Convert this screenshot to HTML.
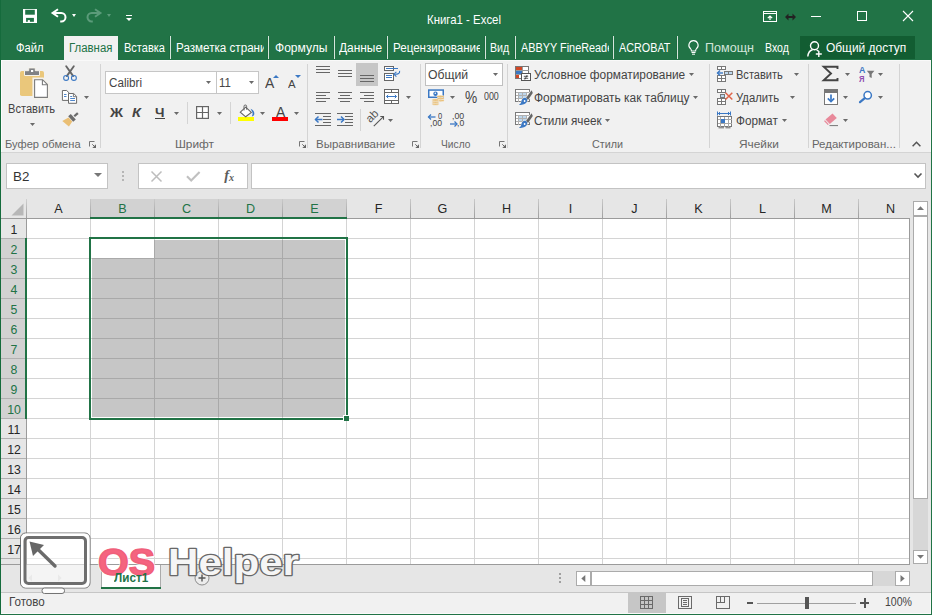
<!DOCTYPE html>
<html lang="ru"><head><meta charset="utf-8"><title>Книга1 - Excel</title>
<style>
html,body{margin:0;padding:0}
body{width:932px;height:615px;overflow:hidden;position:relative;background:#e6e6e6;font-family:"Liberation Sans",sans-serif;font-size:12px;color:#444}
.a{position:absolute}
.t{position:absolute;white-space:nowrap}
.t span{display:inline-block;transform-origin:0 50%}
svg{position:absolute;overflow:visible}
.sep{position:absolute;width:1px;background:#d4d4d4}
.tsep{position:absolute;width:1px;top:36px;height:23px;background:#d6e5dc;box-shadow:-1px 0 0 #1d6b40}
.dd{position:absolute;width:0;height:0;border-left:3px solid transparent;border-right:3px solid transparent;border-top:3px solid #666}
</style></head><body>
<!-- title bar + tabs -->
<div class="a" style="left:0;top:0;width:932px;height:60px;background:#217346"></div>
<div class="a" style="left:64px;top:36px;width:54px;height:24px;background:#f1f1f1"></div>
<div class="a" style="left:800px;top:36px;width:115px;height:23px;background:#125d32"></div>
<div class="tsep" style="left:170px"></div><div class="tsep" style="left:268px"></div><div class="tsep" style="left:334px"></div>
<div class="tsep" style="left:387px"></div><div class="tsep" style="left:485px"></div><div class="tsep" style="left:515px"></div>
<div class="tsep" style="left:613px"></div><div class="tsep" style="left:677px"></div>
<!-- QAT icons -->
<svg style="left:23px;top:9px" width="14" height="14" viewBox="0 0 14 14"><rect x="0" y="0" width="14" height="14" fill="#fff"/><rect x="2.200" y="0.800" width="9.600" height="4.900" fill="#217346"/><rect x="3.100" y="8.900" width="7.800" height="3.900" fill="#217346"/><rect x="4.800" y="11.100" width="2.100" height="1.900" fill="#fff"/></svg>
<svg style="left:51px;top:8px" width="16" height="15" viewBox="51 8 16 15"><path d="M58 9.300L52.600 13l5.400 3.700" fill="none" stroke="#fff" stroke-width="2" stroke-linejoin="miter"/><path d="M54 13h7.300a4.200 4.200 0 0 1 0 8.400h-1.100" fill="none" stroke="#fff" stroke-width="2"/></svg>
<div class="dd" style="left:72px;top:14px;border-top-color:#fff;border-left-width:2.5px;border-right-width:2.5px"></div>
<svg style="left:86px;top:8px" width="16" height="15" viewBox="0 0 16 15"><path d="M9 1.300L14.400 5l-5.400 3.700" fill="none" stroke="#5b9b7a" stroke-width="2"/><path d="M13 5h-7.300a4.200 4.200 0 0 0 0 8.400h1.100" fill="none" stroke="#5b9b7a" stroke-width="2"/></svg>
<div class="dd" style="left:107px;top:14px;border-top-color:#5b9b7a;border-left-width:2.5px;border-right-width:2.5px"></div>
<div class="a" style="left:126px;top:14.500px;width:6px;height:1.500px;background:#fff"></div>
<div class="dd" style="left:126px;top:18px;border-top-color:#fff"></div>
<!-- window controls -->
<svg style="left:763px;top:11px" width="14" height="11" viewBox="0 0 14 11"><g shape-rendering="crispEdges"><rect x="0.500" y="0.500" width="13" height="10" fill="none" stroke="#fff"/><path d="M0.500 2.500h13" stroke="#fff"/></g><path d="M7 9V5.200M4.800 7.200l2.200-2.200l2.200 2.200" fill="none" stroke="#fff" stroke-width="1.200"/></svg>
<svg style="left:785px;top:13px" width="11" height="8" viewBox="0 0 11 8"><path d="M0 4l3.500-3.500v2.500h4v-2.500l3.500 3.500l-3.500 3.500v-2.500h-4v2.500z" fill="#222"/></svg>
<div class="a" style="left:811px;top:16px;width:10px;height:1px;background:#fff"></div>
<div class="a" style="left:857px;top:11px;width:8px;height:8px;border:1px solid #fff"></div>
<svg style="left:903px;top:11px" width="10" height="10" viewBox="0 0 10 10"><path d="M0 0l10 10M10 0L0 10" stroke="#fff" stroke-width="1.1"/></svg>
<!-- help bulb + share person -->
<svg style="left:688px;top:40px" width="11" height="15" viewBox="0 0 11 15"><path d="M5.500 0.600a4.600 4.600 0 0 1 3 8.100c-0.700 0.700-0.900 1.300-0.900 2.300h-4.200c0-1-0.200-1.600-0.900-2.300a4.600 4.600 0 0 1 3-8.100z" fill="none" stroke="#fff" stroke-width="1.100"/><path d="M3.500 12.500h4M4 14.200h3" stroke="#fff" stroke-width="1"/></svg>
<svg style="left:807px;top:41px" width="16" height="16" viewBox="0 0 16 16"><circle cx="7.500" cy="4.800" r="4" fill="none" stroke="#fff" stroke-width="1.400"/><path d="M0.800 15.500c0.400-3.800 2.600-6.200 4.800-6.700M9.500 8.800c0.800 0.300 1.500 0.800 2 1.400" fill="none" stroke="#fff" stroke-width="1.400"/><path d="M11.800 10v6M8.800 13h6" stroke="#fff" stroke-width="1.400"/></svg>

<!-- ribbon -->
<div class="a" style="left:0;top:60px;width:932px;height:92px;background:#f1f1f1"></div>
<div class="a" style="left:1px;top:60px;width:929px;height:1px;background:#f9f9f9"></div>
<div class="a" style="left:0;top:152px;width:932px;height:1px;background:#d4d4d4"></div>
<div class="sep" style="left:100px;top:64px;height:84px;background:#d4d4d4"></div>
<div class="sep" style="left:307px;top:64px;height:84px;background:#d4d4d4"></div>
<div class="sep" style="left:420px;top:64px;height:84px;background:#d4d4d4"></div>
<div class="sep" style="left:507px;top:64px;height:84px;background:#d4d4d4"></div>
<div class="sep" style="left:709px;top:64px;height:84px;background:#d4d4d4"></div>
<div class="sep" style="left:808px;top:64px;height:84px;background:#d4d4d4"></div>
<div class="sep" style="left:899px;top:64px;height:84px;background:#d4d4d4"></div>
<svg style="left:18px;top:66px" width="32" height="34" viewBox="18 66 32 34">
<rect x="20" y="71" width="24" height="25" rx="1.800" fill="#eac77b"/>
<path d="M24.500 75.500v-4.800h4.200v-2.800h6.600v2.800h4.200v4.800z" fill="#808285" stroke="#f6f3ea" stroke-width="1"/>
<rect x="31" y="70" width="2.200" height="2" fill="#fff"/>
<path d="M33.600 78.700h9.400l5.400 5.400v14.300h-14.800z" fill="#fff" stroke="#f4f1ea" stroke-width="2.400"/>
<path d="M34.600 79.700h8l4.800 4.800v12.900h-12.800z" fill="#fff" stroke="#7b7b7b" stroke-width="1.100"/>
<path d="M42.400 79.900v4.800h4.800" fill="none" stroke="#7b7b7b" stroke-width="1.100"/>
</svg>
<svg style="left:30.0px;top:122.7px" width="5" height="3" viewBox="0 0 5 3"><path d="M0 0h5L2.5 3z" fill="#6a6a6a"/></svg>
<svg style="left:62px;top:65px" width="17" height="17" viewBox="62 65 17 17">
<path d="M66.200 66.300l7 9.800M73.800 66.300l-7 9.800" stroke="#666" stroke-width="1.900" stroke-linecap="round"/>
<circle cx="66.100" cy="77.900" r="2.450" fill="none" stroke="#3b78c4" stroke-width="1.100"/>
<circle cx="73.900" cy="77.900" r="2.450" fill="none" stroke="#3b78c4" stroke-width="1.100"/>
</svg>
<svg style="left:61px;top:89px" width="17" height="16" viewBox="61 89 17 16">
<path d="M62.400 90.500h4.300l2.300 2.300v7.600h-6.600z" fill="#fff" stroke="#6b6b6b" stroke-width="1"/>
<path d="M64 94.500h2.500M64 96.500h2.500" stroke="#3b78c4" stroke-width="0.900"/>
<path d="M68.500 93.500h5.200l2.900 2.900v6.900h-8.100z" fill="#fff" stroke="#6b6b6b" stroke-width="1"/>
<path d="M73.400 93.700v3h3" fill="none" stroke="#6b6b6b" stroke-width="0.900"/>
<path d="M70.200 98.500h4.800M70.200 100.500h4.800M70.200 96.500h2" stroke="#3b78c4" stroke-width="0.900"/>
</svg>
<svg style="left:84.0px;top:96.0px" width="5" height="3" viewBox="0 0 5 3"><path d="M0 0h5L2.5 3z" fill="#6a6a6a"/></svg>
<svg style="left:61px;top:111px" width="18" height="17" viewBox="61 111 18 17">
<path d="M62.300 121l6.200-3.600 3.800 4.200-3.400 5z" fill="#eabf75"/>
<path d="M68.200 116.200l2.600-2.200 5 5.400-2.600 2.400z" fill="#6b6b6b"/>
<path d="M73.500 115.500l3.600-3.200 1.500 1.600-3.600 3.200z" fill="#6b6b6b"/>
</svg>
<svg style="left:89px;top:141px" width="7" height="7" viewBox="0 0 7 7"><path d="M0.500 5.500v-5h5" fill="none" stroke="#777" stroke-width="1"/><path d="M7 3.300v3.700h-3.700z" fill="#666"/><path d="M3.300 3.300l3 3" stroke="#666" stroke-width="1"/></svg>
<div class="a" style="left:105px;top:71px;width:110px;height:21px;background:#fff;border:1px solid #c6c6c6"></div>
<div class="a" style="left:216px;top:71px;width:41px;height:21px;background:#fff;border:1px solid #c6c6c6"></div>
<svg style="left:205.9px;top:81.0px" width="5" height="3" viewBox="0 0 5 3"><path d="M0 0h5L2.5 3z" fill="#6a6a6a"/></svg>
<svg style="left:248.8px;top:81.0px" width="5" height="3" viewBox="0 0 5 3"><path d="M0 0h5L2.5 3z" fill="#6a6a6a"/></svg>
<svg style="left:272.600px;top:75px" width="6" height="3" viewBox="0 0 6 3"><path d="M0 3h6L3 0z" fill="#3b78c4"/></svg>
<svg style="left:294.600px;top:75px" width="6" height="3" viewBox="0 0 6 3"><path d="M0 0h6L3 3z" fill="#3b78c4"/></svg>
<svg style="left:173.8px;top:112.0px" width="5" height="3" viewBox="0 0 5 3"><path d="M0 0h5L2.5 3z" fill="#6a6a6a"/></svg>
<div class="a" style="left:155px;top:118px;width:10px;height:1px;background:#444"></div>
<div class="sep" style="left:187px;top:102px;height:22px;background:#d4d4d4"></div>
<div class="sep" style="left:230px;top:102px;height:22px;background:#d4d4d4"></div>
<svg style="left:196px;top:106px" width="13" height="13" viewBox="0 0 13 13"><rect x="0.600" y="0.600" width="11.800" height="11.800" fill="#fff" stroke="#666" stroke-width="1.200"/><path d="M6.500 0.500v12M0.500 6.500h12" stroke="#666" stroke-width="1.200"/></svg>
<svg style="left:217.0px;top:112.0px" width="5" height="3" viewBox="0 0 5 3"><path d="M0 0h5L2.5 3z" fill="#6a6a6a"/></svg>
<svg style="left:237px;top:104px" width="19" height="18" viewBox="237 104 19 18">
<rect x="238" y="117" width="16" height="4" fill="#ffff00"/>
<path d="M245.700 107.200l5.600 5.200-5.600 4.400-5.400-4.600z" fill="#fff" stroke="#666" stroke-width="1.100"/>
<path d="M244 110.500v-4.200a1.300 1.300 0 0 1 2.600 0v3.400" fill="none" stroke="#666" stroke-width="1"/>
<path d="M250.600 108.700c2.700 1 4.100 3.400 3.700 5.500-0.300 1.400-1.300 2.100-2.500 2 1-1.400 1.100-3.300 0.200-4.700z" fill="#3b78c4"/>
</svg>
<svg style="left:259.9px;top:112.0px" width="5" height="3" viewBox="0 0 5 3"><path d="M0 0h5L2.5 3z" fill="#6a6a6a"/></svg>
<div class="a" style="left:272px;top:117px;width:16px;height:4px;background:#ff0000"></div>
<svg style="left:294.0px;top:112.0px" width="5" height="3" viewBox="0 0 5 3"><path d="M0 0h5L2.5 3z" fill="#6a6a6a"/></svg>
<svg style="left:299px;top:141px" width="7" height="7" viewBox="0 0 7 7"><path d="M0.500 5.500v-5h5" fill="none" stroke="#777" stroke-width="1"/><path d="M7 3.300v3.700h-3.700z" fill="#666"/><path d="M3.300 3.300l3 3" stroke="#666" stroke-width="1"/></svg>
<div class="a" style="left:356px;top:63px;width:22px;height:23px;background:#c6c6c6"></div>
<svg style="left:0;top:0" width="932" height="160" viewBox="0 0 932 160" shape-rendering="crispEdges"><rect x="316" y="66" width="14" height="1" fill="#666"/><rect x="316" y="69" width="14" height="1" fill="#666"/><rect x="316" y="72" width="14" height="1" fill="#666"/><rect x="338" y="70" width="14" height="1" fill="#666"/><rect x="338" y="73" width="14" height="1" fill="#666"/><rect x="338" y="76" width="14" height="1" fill="#666"/><rect x="360" y="75" width="14" height="1" fill="#666"/><rect x="360" y="78" width="14" height="1" fill="#666"/><rect x="360" y="81" width="14" height="1" fill="#666"/><rect x="316" y="92" width="14" height="1" fill="#666"/><rect x="316" y="95" width="10" height="1" fill="#666"/><rect x="316" y="98" width="14" height="1" fill="#666"/><rect x="316" y="101" width="10" height="1" fill="#666"/><rect x="338.0" y="92" width="14" height="1" fill="#666"/><rect x="340.0" y="95" width="10" height="1" fill="#666"/><rect x="338.0" y="98" width="14" height="1" fill="#666"/><rect x="340.0" y="101" width="10" height="1" fill="#666"/><rect x="360" y="92" width="14" height="1" fill="#666"/><rect x="364" y="95" width="10" height="1" fill="#666"/><rect x="360" y="98" width="14" height="1" fill="#666"/><rect x="364" y="101" width="10" height="1" fill="#666"/><rect x="315" y="113" width="16" height="1" fill="#666"/><rect x="315" y="125" width="16" height="1" fill="#666"/><rect x="323" y="116" width="8" height="1" fill="#666"/><rect x="323" y="119" width="8" height="1" fill="#666"/><rect x="323" y="122" width="8" height="1" fill="#666"/><rect x="337" y="113" width="16" height="1" fill="#666"/><rect x="337" y="125" width="16" height="1" fill="#666"/><rect x="345" y="116" width="8" height="1" fill="#666"/><rect x="345" y="119" width="8" height="1" fill="#666"/><rect x="345" y="122" width="8" height="1" fill="#666"/></svg>
<svg style="left:383px;top:65px" width="18" height="17" viewBox="383 65 18 17">
<rect x="384.500" y="66.500" width="9" height="4" fill="#fff" stroke="#666"/>
<rect x="384.500" y="73.500" width="9" height="7" fill="#fff" stroke="#666"/>
<path d="M386 68.500h12" stroke="#3b78c4" stroke-width="1"/>
<path d="M386 75.500h6M386 77.500h6" stroke="#3b78c4" stroke-width="1" shape-rendering="crispEdges"/>
<path d="M399.600 70.800c0.400 2.400-1.200 3.500-5.200 3.400" fill="none" stroke="#3b78c4" stroke-width="1.100"/>
<path d="M396.400 71.800l-2.500 2.400 2.500 2.400" fill="none" stroke="#3b78c4" stroke-width="1.100"/>
</svg>
<svg style="left:384px;top:89px" width="15" height="15" viewBox="0 0 15 15">
<g shape-rendering="crispEdges"><rect x="0.500" y="0.500" width="14" height="14" fill="#fff" stroke="#666"/>
<path d="M0.500 3.500h14M0.500 11.500h14M7.500 0.500v3M7.500 11.500v3" stroke="#666"/></g>
<path d="M2.500 7.500h10" stroke="#3b78c4" stroke-width="1"/><path d="M4.200 5.800l-1.700 1.700 1.700 1.700M10.800 5.800l1.700 1.700-1.700 1.700" fill="none" stroke="#3b78c4" stroke-width="1"/>
</svg>
<svg style="left:406.0px;top:96.0px" width="5" height="3" viewBox="0 0 5 3"><path d="M0 0h5L2.5 3z" fill="#6a6a6a"/></svg>
<svg style="left:315px;top:116px" width="8" height="7" viewBox="0 0 8 7"><path d="M0.500 3.500h7" stroke="#3b78c4" stroke-width="1.500"/><path d="M3.500 0.500l-3 3 3 3" fill="none" stroke="#3b78c4" stroke-width="1.500"/></svg>
<svg style="left:337px;top:116px" width="8" height="7" viewBox="0 0 8 7"><path d="M0 3.500h7" stroke="#3b78c4" stroke-width="1.500"/><path d="M4 0.500l3 3-3 3" fill="none" stroke="#3b78c4" stroke-width="1.500"/></svg>
<div class="sep" style="left:360px;top:109px;height:22px;background:#d4d4d4"></div>
<svg style="left:366px;top:110px" width="20" height="19" viewBox="366 110 20 19">
<text x="0" y="0" transform="translate(370.200 123.300) rotate(-45)" font-family="Liberation Sans, sans-serif" font-size="11.500" fill="#555">ab</text>
<path d="M373.800 126.200l9.400-9.400" stroke="#555" stroke-width="1.100"/><path d="M380.300 116.500h3.200v3.200" fill="none" stroke="#555" stroke-width="1.100"/>
</svg>
<svg style="left:388.0px;top:118.7px" width="5" height="3" viewBox="0 0 5 3"><path d="M0 0h5L2.5 3z" fill="#6a6a6a"/></svg>
<svg style="left:412px;top:141px" width="7" height="7" viewBox="0 0 7 7"><path d="M0.500 5.500v-5h5" fill="none" stroke="#777" stroke-width="1"/><path d="M7 3.300v3.700h-3.700z" fill="#666"/><path d="M3.300 3.300l3 3" stroke="#666" stroke-width="1"/></svg>
<div class="a" style="left:425px;top:63px;width:76px;height:21px;background:#fff;border:1px solid #c0c0c0"></div>
<svg style="left:492.7px;top:73.1px" width="5" height="3" viewBox="0 0 5 3"><path d="M0 0h5L2.5 3z" fill="#6a6a6a"/></svg>
<svg style="left:427px;top:88px" width="18" height="18" viewBox="427 88 18 18">
<rect x="428" y="89.300" width="16" height="8.700" fill="#3b78c4"/>
<rect x="429.500" y="90.800" width="13" height="5.700" fill="#fff"/>
<circle cx="435.500" cy="93.700" r="2.200" fill="#3b78c4"/>
<circle cx="435.300" cy="93.300" r="0.800" fill="#fff"/>
<g fill="#eabf75" stroke="#f1f1f1" stroke-width="0.600"><ellipse cx="440.500" cy="100.500" rx="3.700" ry="1.300"/><ellipse cx="440.500" cy="98.500" rx="3.700" ry="1.300"/><ellipse cx="440.500" cy="96.500" rx="3.700" ry="1.300"/>
<ellipse cx="435.500" cy="104" rx="3.700" ry="1.300"/><ellipse cx="435.500" cy="102" rx="3.700" ry="1.300"/><ellipse cx="435.500" cy="100" rx="3.700" ry="1.300"/></g>
</svg>
<svg style="left:450.0px;top:96.0px" width="5" height="3" viewBox="0 0 5 3"><path d="M0 0h5L2.5 3z" fill="#6a6a6a"/></svg>
<svg style="left:428px;top:114px" width="8" height="6" viewBox="0 0 8 6"><path d="M0.500 3h7" stroke="#3b78c4" stroke-width="1.300"/><path d="M3 0.500l-2.500 2.500 2.500 2.500" fill="none" stroke="#3b78c4" stroke-width="1.300"/></svg>
<svg style="left:450px;top:121px" width="8" height="6" viewBox="0 0 8 6"><path d="M0 3h7" stroke="#3b78c4" stroke-width="1.300"/><path d="M4.500 0.500l2.500 2.500-2.500 2.500" fill="none" stroke="#3b78c4" stroke-width="1.300"/></svg>
<svg style="left:499px;top:141px" width="7" height="7" viewBox="0 0 7 7"><path d="M0.500 5.500v-5h5" fill="none" stroke="#777" stroke-width="1"/><path d="M7 3.300v3.700h-3.700z" fill="#666"/><path d="M3.300 3.300l3 3" stroke="#666" stroke-width="1"/></svg>
<svg style="left:514px;top:65px" width="18" height="18" viewBox="514 65 18 18">
<g shape-rendering="crispEdges"><rect x="515.500" y="66.500" width="13" height="12" fill="#fff" stroke="#777"/>
<path d="M515.500 70.500h13M515.500 74.500h13M522.500 66.500v12" stroke="#999"/>
<rect x="516" y="67" width="6" height="3" fill="#d24726"/><rect x="516" y="71" width="6" height="3" fill="#3b78c4"/><rect x="516" y="75" width="3" height="3" fill="#d24726"/>
<rect x="521.500" y="73.500" width="9" height="7" fill="#fff" stroke="#555"/></g>
<path d="M523.800 76.300h4.400M523.800 78.300h4.400M527.200 75l-2.400 4.600" stroke="#333" stroke-width="0.800"/>
</svg>
<svg style="left:514px;top:88px" width="18" height="18" viewBox="514 88 18 18">
<g shape-rendering="crispEdges"><rect x="515.500" y="89.500" width="14" height="12" fill="#fff" stroke="#7a7a7a"/><rect x="519" y="92" width="7" height="6" fill="#bdd7ee"/>
<path d="M515.500 92.500h14M515.500 95.500h14M515.500 98.500h14M518.500 92.500v9M522.500 92.500v9M526.500 92.500v9" stroke="#b0b0b0"/></g>
<path d="M531.600 90.2l-6 8.400 2.200 1.700 5-7.400z" fill="#666" stroke="#f1f1f1" stroke-width="1.200" paint-order="stroke"/>
<path d="M525.200 97.8c-2.800-0.300-3.600 2.200-4 4.200-0.300 1.300-1.200 2.300-2.300 2.800 3.500 0.700 7.800-0.700 8.300-4.200 0.200-1.400-0.600-2.500-2-2.800z" fill="#3b78c4" stroke="#f1f1f1" stroke-width="1" paint-order="stroke"/>
<circle cx="524.600" cy="101" r="0.900" fill="#fff"/>
</svg>
<svg style="left:514px;top:111px" width="18" height="18" viewBox="514 111 18 18">
<g shape-rendering="crispEdges"><rect x="515.500" y="112.500" width="14" height="12" fill="#fff" stroke="#7a7a7a"/><rect x="519" y="115" width="7" height="6" fill="#bdd7ee"/>
<path d="M515.500 115.500h14M515.500 118.500h14M515.500 121.500h14M518.500 115.500v9M522.500 115.500v9M526.500 115.500v9" stroke="#b0b0b0"/></g>
<path d="M531.600 113.2l-6 8.400 2.200 1.700 5-7.400z" fill="#666" stroke="#f1f1f1" stroke-width="1.200" paint-order="stroke"/>
<path d="M525.200 120.8c-2.800-0.300-3.600 2.200-4 4.200-0.300 1.300-1.200 2.300-2.300 2.800 3.500 0.700 7.800-0.700 8.300-4.200 0.200-1.400-0.600-2.500-2-2.800z" fill="#3b78c4" stroke="#f1f1f1" stroke-width="1" paint-order="stroke"/>
<circle cx="524.600" cy="124" r="0.900" fill="#fff"/>
</svg>
<svg style="left:688.7px;top:73.1px" width="5" height="3" viewBox="0 0 5 3"><path d="M0 0h5L2.5 3z" fill="#6a6a6a"/></svg>
<svg style="left:693.0px;top:96.0px" width="5" height="3" viewBox="0 0 5 3"><path d="M0 0h5L2.5 3z" fill="#6a6a6a"/></svg>
<svg style="left:604.5px;top:118.8px" width="5" height="3" viewBox="0 0 5 3"><path d="M0 0h5L2.5 3z" fill="#6a6a6a"/></svg>
<svg style="left:716px;top:65px" width="18" height="18" viewBox="716 65 18 18">
<g shape-rendering="crispEdges" fill="#fff" stroke="#787878"><rect x="717.500" y="66.500" width="4" height="3"/><rect x="721.500" y="66.500" width="4" height="3"/>
<rect x="717.500" y="75.500" width="4" height="3"/><rect x="721.500" y="75.500" width="4" height="3"/><rect x="717.500" y="78.500" width="4" height="3"/><rect x="721.500" y="78.500" width="4" height="3"/>
<rect x="724.500" y="71.500" width="4" height="3" fill="#bdd7ee"/><rect x="728.500" y="71.500" width="4" height="3" fill="#bdd7ee"/></g>
<path d="M717.500 73h5.500" stroke="#3b78c4" stroke-width="1.400"/><path d="M720 70.500l-2.500 2.500 2.500 2.500" fill="none" stroke="#3b78c4" stroke-width="1.400"/>
</svg>
<svg style="left:716px;top:88px" width="18" height="18" viewBox="716 88 18 18">
<g shape-rendering="crispEdges" fill="#fff" stroke="#787878"><rect x="717.500" y="89.500" width="4" height="3"/><rect x="721.500" y="89.500" width="4" height="3"/>
<rect x="717.500" y="98.500" width="4" height="3"/><rect x="721.500" y="98.500" width="4" height="3"/><rect x="717.500" y="101.500" width="4" height="3"/><rect x="721.500" y="101.500" width="4" height="3"/>
<rect x="720.500" y="94.500" width="4" height="3" fill="#bdd7ee"/></g>
<path d="M725.500 92.700l6.800 6.800M732.300 92.700l-6.800 6.800" stroke="#e0654a" stroke-width="1.500"/>
</svg>
<svg style="left:716px;top:111px" width="18" height="18" viewBox="716 111 18 18">
<path d="M717.500 111.500v4M730.500 111.500v4M718 113.500h12M720 112l-1.500 1.500 1.500 1.500M728 112l1.500 1.500-1.500 1.500" fill="none" stroke="#3b78c4" stroke-width="1"/>
<g shape-rendering="crispEdges"><rect x="717.500" y="116.500" width="14" height="10" fill="#fff" stroke="#787878"/>
<path d="M717.500 119.500h14M717.500 123.500h14M720.500 116.500v10M724.500 116.500v10M728.500 116.500v10" stroke="#a6a6a6"/>
<rect x="721" y="119" width="4" height="4" fill="#3b78c4"/></g>
<path d="M718.500 127.800h5.500M725.500 127.800h5" stroke="#666" stroke-width="1"/>
</svg>
<svg style="left:794.0px;top:73.0px" width="5" height="3" viewBox="0 0 5 3"><path d="M0 0h5L2.5 3z" fill="#6a6a6a"/></svg>
<svg style="left:789.9px;top:96.0px" width="5" height="3" viewBox="0 0 5 3"><path d="M0 0h5L2.5 3z" fill="#6a6a6a"/></svg>
<svg style="left:782.1px;top:118.8px" width="5" height="3" viewBox="0 0 5 3"><path d="M0 0h5L2.5 3z" fill="#6a6a6a"/></svg>
<svg style="left:822px;top:65px" width="17" height="17" viewBox="822 65 17 17">
<path d="M837.500 69v-2.300h-13.800l7.300 6.800-7.300 6.800h13.800v-2.300" fill="none" stroke="#444" stroke-width="1.900" stroke-linejoin="miter"/>
</svg>
<svg style="left:844.9px;top:72.7px" width="5" height="3" viewBox="0 0 5 3"><path d="M0 0h5L2.5 3z" fill="#6a6a6a"/></svg>
<svg style="left:866px;top:70px" width="9" height="9" viewBox="866 70 9 9"><path d="M866.800 70.800h7.600l-2.700 3.200v4l-2.200-1v-3z" fill="#777"/></svg>
<svg style="left:878.1px;top:72.7px" width="5" height="3" viewBox="0 0 5 3"><path d="M0 0h5L2.5 3z" fill="#6a6a6a"/></svg>
<svg style="left:823px;top:88px" width="16" height="18" viewBox="823 88 16 18">
<g shape-rendering="crispEdges"><rect x="824.500" y="89.500" width="13" height="15" fill="#fff" stroke="#777"/><rect x="824" y="89" width="14" height="4" fill="#777"/></g>
<path d="M831 94.500v7" stroke="#3b78c4" stroke-width="1.700"/><path d="M827.800 98.300l3.200 3.200 3.200-3.200" fill="none" stroke="#3b78c4" stroke-width="1.700"/>
</svg>
<svg style="left:843.0px;top:96.0px" width="5" height="3" viewBox="0 0 5 3"><path d="M0 0h5L2.5 3z" fill="#6a6a6a"/></svg>
<svg style="left:858px;top:89px" width="16" height="16" viewBox="858 89 16 16">
<circle cx="867.700" cy="95.300" r="3.700" fill="#fff" stroke="#3b78c4" stroke-width="1.500"/><path d="M864.800 98.200l-4.800 4" stroke="#3b78c4" stroke-width="2.200" stroke-linecap="round"/>
</svg>
<svg style="left:878.1px;top:96.0px" width="5" height="3" viewBox="0 0 5 3"><path d="M0 0h5L2.5 3z" fill="#6a6a6a"/></svg>
<svg style="left:823px;top:112px" width="17" height="16" viewBox="823 112 17 16">
<path d="M832.500 113.400l4.300 4.500-7 6.200-4.300-4.500z" fill="#e8899a"/><path d="M825 120.200l3.800 4-1 0.900-3.800-4z" fill="#e8899a"/>
<path d="M829.500 125.600h8.500" stroke="#777" stroke-width="1"/>
</svg>
<svg style="left:843.0px;top:118.8px" width="5" height="3" viewBox="0 0 5 3"><path d="M0 0h5L2.5 3z" fill="#6a6a6a"/></svg>
<svg style="left:912px;top:141px" width="9" height="6" viewBox="0 0 9 6"><path d="M0.600 5.200l3.900-4 3.900 4" fill="none" stroke="#555" stroke-width="1.500"/></svg>

<!-- formula bar -->
<div class="a" style="left:6px;top:163px;width:100px;height:24px;background:#fff;border:1px solid #c3c3c3"></div>
<div class="dd" style="left:93.500px;top:173px;border-left-width:4px;border-right-width:4px;border-top-width:4px;border-top-color:#777"></div>
<div class="a" style="left:122px;top:171px;width:2px;height:2px;background:#b5b5b5"></div>
<div class="a" style="left:122px;top:175px;width:2px;height:2px;background:#b5b5b5"></div>
<div class="a" style="left:122px;top:179px;width:2px;height:2px;background:#b5b5b5"></div>
<div class="a" style="left:138px;top:163px;width:108px;height:24px;background:#fff;border:1px solid #c3c3c3"></div>
<svg style="left:151px;top:171px" width="11" height="11" viewBox="0 0 11 11"><path d="M0.500 0.500l10 10M10.500 0.500l-10 10" stroke="#bdbdbd" stroke-width="1.500"/></svg>
<svg style="left:186px;top:171px" width="15" height="11" viewBox="0 0 15 11"><path d="M1 5.300l4.200 4.300L13.600 0.900" fill="none" stroke="#c0c0c0" stroke-width="2.100"/></svg>
<div class="a" style="left:251px;top:163px;width:673px;height:24px;background:#fff;border:1px solid #c3c3c3"></div>
<svg style="left:914px;top:173px" width="8" height="5" viewBox="0 0 8 5"><path d="M0.500 0.500l3.500 3.500l3.500-3.500" fill="none" stroke="#555" stroke-width="1.600"/></svg>

<!-- grid -->
<div class="a" style="left:1px;top:199px;width:909px;height:365px;background:#fff;overflow:hidden">
<div class="a" style="left:26px;top:20px;width:883px;height:345px;background-image:linear-gradient(to right,#d4d4d4 1px,transparent 1px),linear-gradient(to bottom,#d4d4d4 1px,transparent 1px);background-size:64px 100%,100% 20px;background-position:63px 0,0 19px"></div>
<div class="a" style="left:91px;top:41px;width:253px;height:177px;background-color:#c6c6c6;background-image:linear-gradient(to right,#a9a9a9 1px,transparent 1px),linear-gradient(to bottom,#a9a9a9 1px,transparent 1px);background-size:64px 100%,100% 20px;background-position:62px 0,0 18px"></div>
<div class="a" style="left:90px;top:40px;width:63px;height:19px;background:#fff"></div>
<div class="a" style="left:88px;top:38px;width:259px;height:2px;background:#217346"></div>
<div class="a" style="left:88px;top:38px;width:2px;height:183px;background:#217346"></div>
<div class="a" style="left:88px;top:219px;width:254px;height:2px;background:#217346"></div>
<div class="a" style="left:345px;top:38px;width:2px;height:178px;background:#217346"></div>
<div class="a" style="left:342px;top:216px;width:5px;height:5px;background:#217346;border-left:1px solid #fff;border-top:1px solid #fff"></div>
<div class="a" style="left:0;top:0;width:909px;height:19px;background:#e6e6e6"></div>
<div class="a" style="left:90px;top:0;width:255px;height:19px;background:#d2d2d2"></div>
<div class="a" style="left:0;top:19px;width:909px;height:1px;background:#9b9b9b"></div>
<div class="a" style="left:89px;top:0;width:1px;height:19px;background:linear-gradient(#c9c9c9,#9f9f9f)"></div>
<div class="a" style="left:153px;top:0;width:1px;height:19px;background:linear-gradient(#c9c9c9,#9f9f9f)"></div>
<div class="a" style="left:217px;top:0;width:1px;height:19px;background:linear-gradient(#c9c9c9,#9f9f9f)"></div>
<div class="a" style="left:281px;top:0;width:1px;height:19px;background:linear-gradient(#c9c9c9,#9f9f9f)"></div>
<div class="a" style="left:345px;top:0;width:1px;height:19px;background:linear-gradient(#c9c9c9,#9f9f9f)"></div>
<div class="a" style="left:409px;top:0;width:1px;height:19px;background:linear-gradient(#c9c9c9,#9f9f9f)"></div>
<div class="a" style="left:473px;top:0;width:1px;height:19px;background:linear-gradient(#c9c9c9,#9f9f9f)"></div>
<div class="a" style="left:537px;top:0;width:1px;height:19px;background:linear-gradient(#c9c9c9,#9f9f9f)"></div>
<div class="a" style="left:601px;top:0;width:1px;height:19px;background:linear-gradient(#c9c9c9,#9f9f9f)"></div>
<div class="a" style="left:665px;top:0;width:1px;height:19px;background:linear-gradient(#c9c9c9,#9f9f9f)"></div>
<div class="a" style="left:729px;top:0;width:1px;height:19px;background:linear-gradient(#c9c9c9,#9f9f9f)"></div>
<div class="a" style="left:793px;top:0;width:1px;height:19px;background:linear-gradient(#c9c9c9,#9f9f9f)"></div>
<div class="a" style="left:857px;top:0;width:1px;height:19px;background:linear-gradient(#c9c9c9,#9f9f9f)"></div>
<div class="a" style="left:89px;top:18px;width:257px;height:2px;background:#217346"></div>
<div class="a" style="left:0;top:20px;width:25px;height:345px;background:#e6e6e6"></div>
<div class="a" style="left:0;top:40px;width:25px;height:179px;background:#d2d2d2"></div>
<div class="a" style="left:25px;top:0;width:1px;height:365px;background:#9b9b9b"></div>
<div class="a" style="left:25px;top:0;width:1px;height:19px;background:linear-gradient(#d0d0d0,#9f9f9f)"></div>
<div class="a" style="left:0;top:39px;width:25px;height:1px;background:#b1b1b1"></div>
<div class="a" style="left:0;top:59px;width:25px;height:1px;background:#b1b1b1"></div>
<div class="a" style="left:0;top:79px;width:25px;height:1px;background:#b1b1b1"></div>
<div class="a" style="left:0;top:99px;width:25px;height:1px;background:#b1b1b1"></div>
<div class="a" style="left:0;top:119px;width:25px;height:1px;background:#b1b1b1"></div>
<div class="a" style="left:0;top:139px;width:25px;height:1px;background:#b1b1b1"></div>
<div class="a" style="left:0;top:159px;width:25px;height:1px;background:#b1b1b1"></div>
<div class="a" style="left:0;top:179px;width:25px;height:1px;background:#b1b1b1"></div>
<div class="a" style="left:0;top:199px;width:25px;height:1px;background:#b1b1b1"></div>
<div class="a" style="left:0;top:219px;width:25px;height:1px;background:#b1b1b1"></div>
<div class="a" style="left:0;top:239px;width:25px;height:1px;background:#b1b1b1"></div>
<div class="a" style="left:0;top:259px;width:25px;height:1px;background:#b1b1b1"></div>
<div class="a" style="left:0;top:279px;width:25px;height:1px;background:#b1b1b1"></div>
<div class="a" style="left:0;top:299px;width:25px;height:1px;background:#b1b1b1"></div>
<div class="a" style="left:0;top:319px;width:25px;height:1px;background:#b1b1b1"></div>
<div class="a" style="left:0;top:339px;width:25px;height:1px;background:#b1b1b1"></div>
<div class="a" style="left:0;top:359px;width:25px;height:1px;background:#b1b1b1"></div>
<div class="a" style="left:24px;top:39px;width:2px;height:181px;background:#217346"></div>
<svg style="left:10px;top:4px" width="13" height="13" viewBox="0 0 13 13"><path d="M12.500 0.500v12h-12z" fill="#b7b7b7"/></svg>
</div>
<div class="a" style="left:909px;top:218px;width:1px;height:347px;background:#9b9b9b"></div>
<div class="a" style="left:1px;top:564px;width:909px;height:1px;background:#9b9b9b"></div>

<!-- sheet tabs bar -->
<div class="a" style="left:101px;top:565px;width:58px;height:22px;background:#fff;border-left:1px solid #ababab;border-right:1px solid #ababab"></div>
<div class="a" style="left:101px;top:587px;width:60px;height:2px;background:#217346"></div>
<svg style="left:194px;top:570px" width="16" height="16" viewBox="0 0 16 16"><circle cx="8" cy="8" r="7" fill="#ececec" stroke="#8c8c8c" stroke-width="1"/><path d="M8 4.500v7M4.500 8h7" stroke="#555" stroke-width="1.400"/></svg>
<!-- h scrollbar -->
<div class="a" style="left:559px;top:573px;width:2px;height:2px;background:#a0a0a0"></div>
<div class="a" style="left:559px;top:577px;width:2px;height:2px;background:#a0a0a0"></div>
<div class="a" style="left:559px;top:581px;width:2px;height:2px;background:#a0a0a0"></div>
<div class="a" style="left:576px;top:571px;width:334px;height:15px;background:#d7d7d7"></div>
<div class="a" style="left:576px;top:571px;width:13px;height:13px;background:#fff;border:1px solid #ababab"></div>
<div class="a" style="left:591px;top:571px;width:280px;height:13px;background:#fff;border:1px solid #ababab"></div>
<div class="a" style="left:895px;top:571px;width:13px;height:13px;background:#fff;border:1px solid #ababab"></div>
<svg style="left:581px;top:575px" width="5" height="7" viewBox="0 0 5 7"><path d="M4.300 0v7L0.300 3.500z" fill="#777"/></svg>
<svg style="left:900px;top:575px" width="5" height="7" viewBox="0 0 5 7"><path d="M0.500 0v7L4.700 3.500z" fill="#777"/></svg>
<!-- v scrollbar -->
<div class="a" style="left:913px;top:201px;width:15px;height:363px;background:#d7d7d7"></div>
<div class="a" style="left:913px;top:201px;width:13px;height:13px;background:#fff;border:1px solid #ababab"></div>
<div class="a" style="left:913px;top:216px;width:13px;height:281px;background:#fff;border:1px solid #ababab"></div>
<div class="a" style="left:913px;top:550px;width:13px;height:12px;background:#fff;border:1px solid #ababab"></div>
<svg style="left:917px;top:206px" width="7" height="4" viewBox="0 0 7 4"><path d="M0 4h7L3.500 0.300z" fill="#777"/></svg>
<svg style="left:917px;top:555px" width="7" height="4" viewBox="0 0 7 4"><path d="M0 0h7L3.500 3.700z" fill="#777"/></svg>
<!-- status bar -->
<div class="a" style="left:1px;top:592px;width:930px;height:22px;background:#f1f1f1;box-shadow:inset -1px -1px 0 #fafafa"></div>
<div class="a" style="left:1px;top:592px;width:930px;height:1px;background:#c6c6c6"></div>
<div class="a" style="left:628px;top:593px;width:38px;height:20px;background:#c6c6c6"></div>
<svg style="left:640px;top:596px" width="13" height="13" viewBox="0 0 13 13" shape-rendering="crispEdges"><path d="M0.500 0.500h12v12h-12zM0.500 4.500h12M0.500 8.500h12M4.500 0.500v12M8.500 0.500v12" fill="none" stroke="#6a6a6a"/></svg>
<svg style="left:678px;top:596px" width="14" height="13" viewBox="0 0 14 13" shape-rendering="crispEdges"><path d="M0.500 0.500h13v12h-13zM3.500 2.500h7v8h-7zM5 4.500h4M5 6.500h4M5 8.500h4" fill="none" stroke="#6a6a6a"/></svg>
<svg style="left:716px;top:596px" width="14" height="13" viewBox="0 0 14 13" shape-rendering="crispEdges"><path d="M0.500 0.500h13v12h-13zM4.500 0.500v6M8.500 0.500v6M0.500 6.500h8" fill="none" stroke="#6a6a6a"/></svg>
<div class="a" style="left:747px;top:602px;width:6px;height:2px;background:#555"></div>
<div class="a" style="left:757px;top:603px;width:99px;height:1px;background:#a0a0a0"></div>
<div class="a" style="left:805px;top:597px;width:4px;height:12px;background:#555"></div>
<div class="a" style="left:860px;top:602px;width:9px;height:2px;background:#555"></div>
<div class="a" style="left:864px;top:598px;width:2px;height:10px;background:#555"></div>
<!-- nav arrows -->
<svg style="left:28px;top:574px" width="34" height="8" viewBox="0 0 34 8"><path d="M4 0.500v7L0.500 4z" fill="#cfcfcf"/><path d="M30 0.500v7l3.500-3.500z" fill="#cfcfcf"/></svg>
<!-- watermark -->
<svg style="left:0;top:525px" width="320" height="75" viewBox="0 525 320 75">
<rect x="20.500" y="533" width="69.500" height="55" rx="5" fill="#fff" fill-opacity="0.550" stroke="#747474" stroke-width="1"/>
<rect x="22.400" y="534.900" width="65.700" height="51.200" rx="4" fill="none" stroke="#fff" stroke-width="2.800"/>
<rect x="42" y="588" width="22.500" height="5.500" rx="2.500" fill="#fff" fill-opacity="0.900" stroke="#747474" stroke-width="1"/>
<rect x="25" y="537.500" width="60.500" height="46" rx="3.500" fill="none" stroke="#6e6e6e" stroke-width="3"/>
<path d="M55 566L36 547.500" stroke="#6a6a6a" stroke-width="3.400" stroke-linecap="round"/>
<path d="M29.500 541.500l14.500 3.500l-11 11z" fill="#666"/>
<text x="98" y="574.500" font-family="Liberation Sans, sans-serif" font-weight="bold" font-size="37" textLength="57" lengthAdjust="spacingAndGlyphs" fill="#f5647f" stroke="#fff" stroke-width="3" paint-order="stroke" stroke-opacity="0.850">OS</text>
<text x="98" y="574.500" font-family="Liberation Sans, sans-serif" font-weight="bold" font-size="37" textLength="57" lengthAdjust="spacingAndGlyphs" fill="#f5647f" stroke="#f0607b" stroke-width="1.500" stroke-linejoin="round">OS</text>
<text x="168" y="574.500" font-family="Liberation Sans, sans-serif" font-weight="bold" font-size="36.500" textLength="131" lengthAdjust="spacingAndGlyphs" fill="#f5f5f5" stroke="#686868" stroke-width="2.600" paint-order="stroke" stroke-linejoin="round">Helper</text>
</svg>
<div class="t" style="left:427.0px;top:11.50px;font-size:12.4px;line-height:16.4px;color:#fff;"><span id="t0" style="transform:scaleX(0.9212)">Книга1 - Excel</span></div>
<div class="t" style="left:16.396666666666665px;top:39.54px;font-size:12px;line-height:16px;color:#ffffff;"><span id="t1" style="transform:scaleX(0.9352)">Файл</span></div>
<div class="t" style="left:69.0px;top:39.54px;font-size:12px;line-height:16px;color:#217346;"><span id="t2" style="transform:scaleX(0.9502)">Главная</span></div>
<div class="t" style="left:124.0px;top:39.54px;font-size:12px;line-height:16px;color:#ffffff;"><span id="t3" style="transform:scaleX(0.9191)">Вставка</span></div>
<div class="t" style="left:175.8px;top:39.54px;font-size:12px;line-height:16px;color:#ffffff;width:88.6px;overflow:hidden"><span id="t4" style="transform:scaleX(0.9699)">Разметка страницы</span></div>
<div class="t" style="left:274.60115384615386px;top:39.54px;font-size:12px;line-height:16px;color:#ffffff;"><span id="t5" style="transform:scaleX(1.0035)">Формулы</span></div>
<div class="t" style="left:339.0px;top:39.54px;font-size:12px;line-height:16px;color:#ffffff;"><span id="t6" style="transform:scaleX(0.9917)">Данные</span></div>
<div class="t" style="left:392.6px;top:39.54px;font-size:12px;line-height:16px;color:#ffffff;width:87.5px;overflow:hidden"><span id="t7" style="transform:scaleX(0.9658)">Рецензирование</span></div>
<div class="t" style="left:490.39842105263153px;top:39.54px;font-size:12px;line-height:16px;color:#ffffff;"><span id="t8" style="transform:scaleX(0.8841)">Вид</span></div>
<div class="t" style="left:520.5px;top:39.54px;font-size:12px;line-height:16px;color:#ffffff;width:88.2px;overflow:hidden"><span id="t9" style="transform:scaleX(0.9051)">ABBYY FineReader</span></div>
<div class="t" style="left:619.0px;top:39.54px;font-size:12px;line-height:16px;color:#ffffff;"><span id="t10" style="transform:scaleX(0.8998)">ACROBAT</span></div>
<div class="t" style="left:705px;top:39.54px;font-size:12px;line-height:16px;color:#d3e5da;width:49.2px;overflow:hidden"><span id="t11" style="transform:scaleX(1.0479)">Помощник</span></div>
<div class="t" style="left:765.2096px;top:39.54px;font-size:12px;line-height:16px;color:#ffffff;"><span id="t12" style="transform:scaleX(0.8769)">Вход</span></div>
<div class="t" style="left:826.1995000000001px;top:39.54px;font-size:12px;line-height:16px;color:#ffffff;"><span id="t13" style="transform:scaleX(0.9947)">Общий доступ</span></div>
<div class="t" style="left:12.728000000000002px;top:168.82px;font-size:12.5px;line-height:16.5px;color:#333;"><span id="t14" style="transform:scaleX(1.0690)">B2</span></div>
<div class="t" style="left:224.3px;top:166.33px;font-size:14.5px;line-height:18.5px;color:#5c5c5c;font-style:italic;font-family:'Liberation Serif',serif;font-weight:bold;"><span id="t15">f</span></div>
<div class="t" style="left:229px;top:170.84px;font-size:10px;line-height:14px;color:#5c5c5c;font-style:italic;font-family:'Liberation Serif',serif;font-weight:bold;"><span id="t16">x</span></div>
<div class="t" style="left:38.5px;top:200.93px;font-size:12.6px;line-height:16.6px;color:#262626;width:40px;text-align:center;clip-path:inset(0 0px 0 0);"><span id="t17">A</span></div>
<div class="t" style="left:102.5px;top:200.93px;font-size:12.6px;line-height:16.6px;color:#217346;width:40px;text-align:center;clip-path:inset(0 0px 0 0);"><span id="t18">B</span></div>
<div class="t" style="left:166.5px;top:200.93px;font-size:12.6px;line-height:16.6px;color:#217346;width:40px;text-align:center;clip-path:inset(0 0px 0 0);"><span id="t19">C</span></div>
<div class="t" style="left:230.5px;top:200.93px;font-size:12.6px;line-height:16.6px;color:#217346;width:40px;text-align:center;clip-path:inset(0 0px 0 0);"><span id="t20">D</span></div>
<div class="t" style="left:294.5px;top:200.93px;font-size:12.6px;line-height:16.6px;color:#217346;width:40px;text-align:center;clip-path:inset(0 0px 0 0);"><span id="t21">E</span></div>
<div class="t" style="left:358.5px;top:200.93px;font-size:12.6px;line-height:16.6px;color:#262626;width:40px;text-align:center;clip-path:inset(0 0px 0 0);"><span id="t22">F</span></div>
<div class="t" style="left:422.5px;top:200.93px;font-size:12.6px;line-height:16.6px;color:#262626;width:40px;text-align:center;clip-path:inset(0 0px 0 0);"><span id="t23">G</span></div>
<div class="t" style="left:486.5px;top:200.93px;font-size:12.6px;line-height:16.6px;color:#262626;width:40px;text-align:center;clip-path:inset(0 0px 0 0);"><span id="t24">H</span></div>
<div class="t" style="left:550.5px;top:200.93px;font-size:12.6px;line-height:16.6px;color:#262626;width:40px;text-align:center;clip-path:inset(0 0px 0 0);"><span id="t25">I</span></div>
<div class="t" style="left:614.5px;top:200.93px;font-size:12.6px;line-height:16.6px;color:#262626;width:40px;text-align:center;clip-path:inset(0 0px 0 0);"><span id="t26">J</span></div>
<div class="t" style="left:678.5px;top:200.93px;font-size:12.6px;line-height:16.6px;color:#262626;width:40px;text-align:center;clip-path:inset(0 0px 0 0);"><span id="t27">K</span></div>
<div class="t" style="left:742.5px;top:200.93px;font-size:12.6px;line-height:16.6px;color:#262626;width:40px;text-align:center;clip-path:inset(0 0px 0 0);"><span id="t28">L</span></div>
<div class="t" style="left:806.5px;top:200.93px;font-size:12.6px;line-height:16.6px;color:#262626;width:40px;text-align:center;clip-path:inset(0 0px 0 0);"><span id="t29">M</span></div>
<div class="t" style="left:870.5px;top:200.93px;font-size:12.6px;line-height:16.6px;color:#262626;width:40px;text-align:center;"><span id="t30">N</span></div>
<div class="t" style="left:1px;top:222.09px;font-size:12.3px;line-height:16.3px;color:#262626;width:26px;text-align:center;"><span id="t31">1</span></div>
<div class="t" style="left:1px;top:242.09px;font-size:12.3px;line-height:16.3px;color:#217346;width:26px;text-align:center;"><span id="t32">2</span></div>
<div class="t" style="left:1px;top:262.09px;font-size:12.3px;line-height:16.3px;color:#217346;width:26px;text-align:center;"><span id="t33">3</span></div>
<div class="t" style="left:1px;top:282.09px;font-size:12.3px;line-height:16.3px;color:#217346;width:26px;text-align:center;"><span id="t34">4</span></div>
<div class="t" style="left:1px;top:302.09px;font-size:12.3px;line-height:16.3px;color:#217346;width:26px;text-align:center;"><span id="t35">5</span></div>
<div class="t" style="left:1px;top:322.09px;font-size:12.3px;line-height:16.3px;color:#217346;width:26px;text-align:center;"><span id="t36">6</span></div>
<div class="t" style="left:1px;top:342.09px;font-size:12.3px;line-height:16.3px;color:#217346;width:26px;text-align:center;"><span id="t37">7</span></div>
<div class="t" style="left:1px;top:362.09px;font-size:12.3px;line-height:16.3px;color:#217346;width:26px;text-align:center;"><span id="t38">8</span></div>
<div class="t" style="left:1px;top:382.09px;font-size:12.3px;line-height:16.3px;color:#217346;width:26px;text-align:center;"><span id="t39">9</span></div>
<div class="t" style="left:1px;top:402.09px;font-size:12.3px;line-height:16.3px;color:#217346;width:26px;text-align:center;"><span id="t40">10</span></div>
<div class="t" style="left:1px;top:422.09px;font-size:12.3px;line-height:16.3px;color:#262626;width:26px;text-align:center;"><span id="t41">11</span></div>
<div class="t" style="left:1px;top:442.09px;font-size:12.3px;line-height:16.3px;color:#262626;width:26px;text-align:center;"><span id="t42">12</span></div>
<div class="t" style="left:1px;top:462.09px;font-size:12.3px;line-height:16.3px;color:#262626;width:26px;text-align:center;"><span id="t43">13</span></div>
<div class="t" style="left:1px;top:482.09px;font-size:12.3px;line-height:16.3px;color:#262626;width:26px;text-align:center;"><span id="t44">14</span></div>
<div class="t" style="left:1px;top:502.09px;font-size:12.3px;line-height:16.3px;color:#262626;width:26px;text-align:center;"><span id="t45">15</span></div>
<div class="t" style="left:1px;top:522.09px;font-size:12.3px;line-height:16.3px;color:#262626;width:26px;text-align:center;"><span id="t46">16</span></div>
<div class="t" style="left:1px;top:542.09px;font-size:12.3px;line-height:16.3px;color:#262626;width:26px;text-align:center;"><span id="t47">17</span></div>
<div class="t" style="left:113.60088235294117px;top:570.14px;font-size:12px;line-height:16px;color:#217346;font-weight:700;"><span id="t48" style="transform:scaleX(0.9763)">Лист1</span></div>
<div class="t" style="left:9.19542857142857px;top:594.34px;font-size:12px;line-height:16px;color:#444;"><span id="t49" style="transform:scaleX(0.9661)">Готово</span></div>
<div class="t" style="left:885.3942307692308px;top:594.34px;font-size:12px;line-height:16px;color:#444;"><span id="t50" style="transform:scaleX(0.8797)">100%</span></div>
<div class="t" style="left:8.0px;top:100.54px;font-size:12px;line-height:16px;color:#444444;"><span id="t51" style="transform:scaleX(0.9238)">Вставить</span></div>
<div class="t" style="left:4.798947368421054px;top:137.02px;font-size:11.2px;line-height:15.2px;color:#666666;"><span id="t52" style="transform:scaleX(0.9943)">Буфер обмена</span></div>
<div class="t" style="left:109.0px;top:74.54px;font-size:12px;line-height:16px;color:#444444;"><span id="t53" style="transform:scaleX(0.9701)">Calibri</span></div>
<div class="t" style="left:219.18545454545455px;top:74.54px;font-size:12px;line-height:16px;color:#444444;"><span id="t54" style="transform:scaleX(0.9475)">11</span></div>
<div class="t" style="left:265.3px;top:73.85px;font-size:14px;line-height:18px;color:#444444;"><span id="t55" style="transform:scaleX(0.9953)">A</span></div>
<div class="t" style="left:288px;top:76.83px;font-size:10.6px;line-height:14.6px;color:#444444;"><span id="t56" style="transform:scaleX(1.0737)">A</span></div>
<div class="t" style="left:109.80000000000001px;top:104.54px;font-size:12px;line-height:16px;color:#444444;font-weight:700;"><span id="t57" style="transform:scaleX(1.1971)">Ж</span></div>
<div class="t" style="left:132.23999999999998px;top:104.54px;font-size:12px;line-height:16px;color:#444444;font-weight:700;font-style:italic;"><span id="t58" style="transform:scaleX(1.2056)">К</span></div>
<div class="t" style="left:154.95625px;top:104.54px;font-size:12px;line-height:16px;color:#444444;font-weight:700;"><span id="t59" style="transform:scaleX(1.1213)">Ч</span></div>
<div class="t" style="left:275.6px;top:103.15px;font-size:14px;line-height:18px;color:#444444;"><span id="t60" style="transform:scaleX(0.9953)">A</span></div>
<div class="t" style="left:175.36486486486484px;top:137.02px;font-size:11.2px;line-height:15.2px;color:#666666;"><span id="t61" style="transform:scaleX(1.0602)">Шрифт</span></div>
<div class="t" style="left:315.9993670886076px;top:137.02px;font-size:11.2px;line-height:15.2px;color:#666666;"><span id="t62" style="transform:scaleX(1.0284)">Выравнивание</span></div>
<div class="t" style="left:428.3953846153846px;top:67.24px;font-size:12px;line-height:16px;color:#444444;"><span id="t63" style="transform:scaleX(1.0180)">Общий</span></div>
<div class="t" style="left:464.7876923076923px;top:88.29px;font-size:15.6px;line-height:19.6px;color:#444444;"><span id="t64" style="transform:scaleX(0.8802)">%</span></div>
<div class="t" style="left:484.2026666666667px;top:89.73px;font-size:10px;line-height:14px;color:#444444;"><span id="t65" style="transform:scaleX(0.8869)">000</span></div>
<div class="t" style="left:437.8px;top:109.67px;font-size:8.3px;line-height:12.3px;color:#444444;"><span id="t66" style="transform:scaleX(0.9081)">0</span></div>
<div class="t" style="left:430px;top:116.97px;font-size:8.3px;line-height:12.3px;color:#444444;"><span id="t67" style="transform:scaleX(1.0392)">,00</span></div>
<div class="t" style="left:452px;top:109.67px;font-size:8.3px;line-height:12.3px;color:#444444;"><span id="t68" style="transform:scaleX(1.0566)">,00</span></div>
<div class="t" style="left:457px;top:116.97px;font-size:8.3px;line-height:12.3px;color:#444444;"><span id="t69" style="transform:scaleX(1.0402)">,0</span></div>
<div class="t" style="left:441.0px;top:137.02px;font-size:11.2px;line-height:15.2px;color:#666666;"><span id="t70" style="transform:scaleX(0.9135)">Число</span></div>
<div class="t" style="left:534.3994736842106px;top:67.24px;font-size:12px;line-height:16px;color:#444444;"><span id="t71" style="transform:scaleX(0.9904)">Условное форматирование</span></div>
<div class="t" style="left:534.3997435897437px;top:89.84px;font-size:12px;line-height:16px;color:#444444;"><span id="t72" style="transform:scaleX(0.9965)">Форматировать как таблицу</span></div>
<div class="t" style="left:534.399411764706px;top:112.84px;font-size:12px;line-height:16px;color:#444444;"><span id="t73" style="transform:scaleX(0.9760)">Стили ячеек</span></div>
<div class="t" style="left:592.0px;top:137.02px;font-size:11.2px;line-height:15.2px;color:#666666;"><span id="t74" style="transform:scaleX(0.9617)">Стили</span></div>
<div class="t" style="left:736.2008510638299px;top:67.04px;font-size:12px;line-height:16px;color:#444444;"><span id="t75" style="transform:scaleX(0.9199)">Вставить</span></div>
<div class="t" style="left:736.1990697674419px;top:89.64px;font-size:12px;line-height:16px;color:#444444;"><span id="t76" style="transform:scaleX(0.9427)">Удалить</span></div>
<div class="t" style="left:736.2055813953489px;top:112.54px;font-size:12px;line-height:16px;color:#444444;"><span id="t77" style="transform:scaleX(0.9805)">Формат</span></div>
<div class="t" style="left:739.0px;top:137.02px;font-size:11.2px;line-height:15.2px;color:#666666;"><span id="t78" style="transform:scaleX(1.0606)">Ячейки</span></div>
<div class="t" style="left:858.8px;top:62.86px;font-size:9.5px;line-height:13.5px;color:#3b78c4;font-weight:700;"><span id="t79" style="transform:scaleX(0.9309)">A</span></div>
<div class="t" style="left:859.4px;top:71.96px;font-size:9.5px;line-height:13.5px;color:#8e4db0;font-weight:700;"><span id="t80" style="transform:scaleX(0.8055)">Я</span></div>
<div class="t" style="left:811.994512195122px;top:137.02px;font-size:11.2px;line-height:15.2px;color:#666666;"><span id="t81" style="transform:scaleX(1.0211)">Редактирован...</span></div>
<!-- window border -->
<div class="a" style="left:0;top:0;width:1px;height:615px;background:#156b3c"></div>
<div class="a" style="left:1px;top:60px;width:1px;height:92px;background:#fbfbfb"></div>
<div class="a" style="left:930px;top:60px;width:1px;height:92px;background:#f8f8f8"></div>
<div class="a" style="left:931px;top:0;width:1px;height:615px;background:#217346"></div>
<div class="a" style="left:0;top:614px;width:932px;height:1px;background:#217346"></div>
</body></html>
